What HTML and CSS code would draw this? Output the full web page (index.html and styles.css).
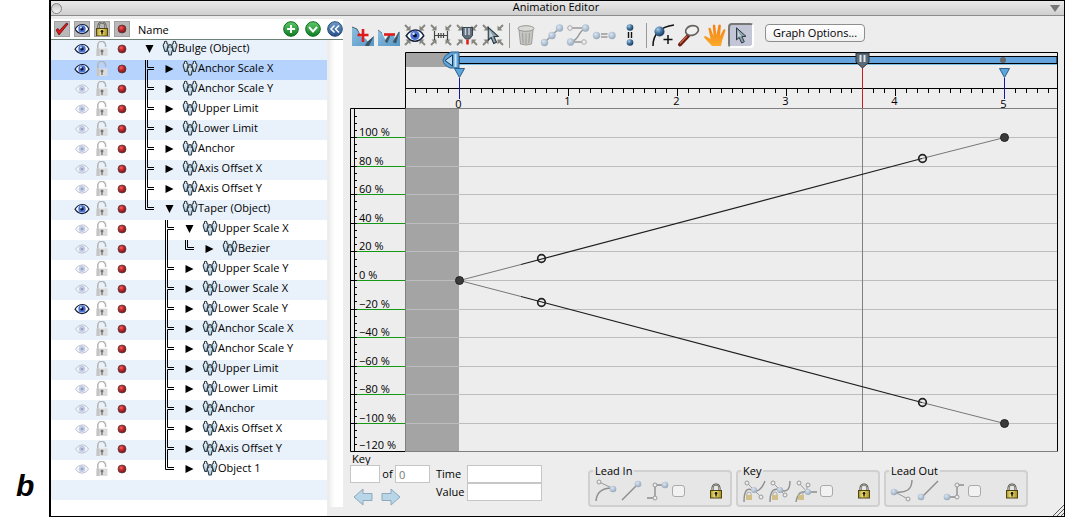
FILE: index.html
```html
<!DOCTYPE html>
<html lang="en">
<head>
<meta charset="utf-8">
<title>Animation Editor</title>
<link rel="stylesheet" href="styles.css">
</head>
<body>
<svg class="defs" aria-hidden="true">
  <defs>
    <radialGradient id="red" cx=".4" cy=".35" r=".6"><stop offset="0" stop-color="#ef6a66"/><stop offset=".5" stop-color="#c2292c"/><stop offset="1" stop-color="#7a1a1e"/></radialGradient>
    <radialGradient id="blue" cx=".35" cy=".3" r=".75"><stop offset="0" stop-color="#a9cdea"/><stop offset=".5" stop-color="#41739f"/><stop offset="1" stop-color="#16324d"/></radialGradient>
    <radialGradient id="pale" cx=".4" cy=".35" r=".7"><stop offset="0" stop-color="#dbe5f0"/><stop offset=".6" stop-color="#aebfd2"/><stop offset="1" stop-color="#92a3b5"/></radialGradient>
    <linearGradient id="green" x2="0" y2="1"><stop offset="0" stop-color="#5fc96a"/><stop offset="1" stop-color="#0c7d22"/></linearGradient>
    <linearGradient id="navy" x2="0" y2="1"><stop offset="0" stop-color="#6f9ccb"/><stop offset="1" stop-color="#244f86"/></linearGradient>
    <linearGradient id="gold"><stop offset="0" stop-color="#a8932c"/><stop offset=".4" stop-color="#f3e37c"/><stop offset="1" stop-color="#a58d1e"/></linearGradient>
    <linearGradient id="sky" x2="1" y2="1"><stop offset="0" stop-color="#8fbfe0"/><stop offset="1" stop-color="#5596c4"/></linearGradient>
    <linearGradient id="orange" x2="0" y2="1"><stop offset="0" stop-color="#f47f10"/><stop offset="1" stop-color="#fbab2c"/></linearGradient>
    <linearGradient id="body" x2="0" y2="1"><stop offset="0" stop-color="#f2f8fc"/><stop offset="1" stop-color="#a9c8de"/></linearGradient>
    <symbol id="eye" viewBox="0 0 16 12"><path d="M1 6.200Q4 1.500 8.400 1.500T15 6.200Q12 10.600 8 10.600T1 6.200Z" fill="#fff" stroke="#17203c" stroke-width="1.200"/><circle cx="8" cy="5.900" r="3.700" fill="#4a72d4"/><circle cx="8" cy="5.900" r="1.600" fill="#081233"/><circle cx="6.900" cy="4.600" r="1" fill="#dfeaff"/></symbol>
    <symbol id="eye-off" viewBox="0 0 16 12"><path d="M1.500 6.200Q4 1.900 8.200 1.900T14.500 6.200Q12 10.200 8 10.200T1.500 6.200Z" fill="#f4f6fb" stroke="#b4bac8" stroke-width=".9"/><circle cx="8" cy="6" r="3.200" fill="#c3cee6"/><circle cx="8" cy="6" r="1.300" fill="#97a3c0"/></symbol>
    <symbol id="unlock" viewBox="0 0 12 16"><path d="M1.800 8V4.500a3.700 3.700 0 0 1 7.800-.5v2" fill="none" stroke="#b4b4b4" stroke-width="1.500"/><rect x=".5" y="7.500" width="11" height="7.500" fill="#dcdcdc"/><path d="M.5 7.500h3v7.500h-3z" fill="#c4c4c4"/><circle cx="6" cy="10" r="1.500" fill="#777"/><path d="M6 10v4" stroke="#777" stroke-width="1.300"/></symbol>
    <symbol id="lock" viewBox="0 0 14 16"><path d="M3.500 8V5a3.500 3.500 0 0 1 7 0v3" fill="none" stroke="#3d3d36" stroke-width="2"/><path d="M3.500 7.500V5a3.500 3.500 0 0 1 7 0v2.500" fill="none" stroke="#c9c9bc" stroke-width=".8"/><rect x="1.500" y="7.500" width="11" height="7.500" fill="url(#gold)" stroke="#4f4512"/><circle cx="7" cy="10.300" r="1.300" fill="#15130a"/><path d="M7 10v3.500" stroke="#15130a" stroke-width="1.300"/></symbol>
    <symbol id="dot" viewBox="0 0 10 10"><circle cx="5" cy="5" r="4" fill="url(#red)" stroke="#5d3a3a" stroke-width=".8"/></symbol>
    <symbol id="check" viewBox="0 0 16 16"><path d="M2 9l3 5L14 3 12.500 2 5.500 9.500 4 7.500z" fill="#e8151b" stroke="#40090b" stroke-width=".7"/></symbol>
    <symbol id="channel" viewBox="0 0 16 16"><g fill="url(#body)" stroke="#2f3c46" stroke-width="1.100" stroke-linejoin="round"><path d="M1.200 5.500Q1.200 3.800 2.600 3.300 2 1.200 3.600 1.200T4.800 3.300Q6.200 3.800 6 5.500L5.300 8.500 4.800 11.500H3L2 8.500z"/><path d="M10 5.500Q10 3.800 11.400 3.300 10.800 1.200 12.400 1.200T13.600 3.300Q15.100 3.800 14.900 5.500L14 8.500 13.300 11.500H11.600L10.800 8.500z"/><path d="M5.300 9.500Q5.300 7.700 6.900 7.200 6.200 4.600 8 4.600T9.100 7.200Q10.800 7.700 10.700 9.500L9.800 12 9.300 15H6.900L6.300 12z"/></g></symbol>
    <symbol id="corners" viewBox="0 0 26 26"><path d="M8.500 3.500v5h-5zM17.500 3.500v5h5zM8.500 22.500v-5h-5zM17.500 22.500v-5h5z" fill="#85857f"/><path d="M3 3l4 4M23 3l-4 4M3 23l4-4M23 23l-4-4" stroke="#85857f" stroke-width="1.800"/></symbol>
    <symbol id="pointer" viewBox="0 0 16 22"><path d="M2.500 1.500v15l3.300-3 3 6.800 3.300-1.600-3-6.200 5-.5z" fill="#8fa3af" stroke="#26333b" stroke-width="1.200"/><path d="M4 5v8l4-1z" fill="#c5d2da"/></symbol>
  </defs>
</svg>

<aside class="figure"><span>b</span></aside>
<main class="window">
  <header class="titlebar">
    <button class="close" aria-label="Close"></button>
    <h1>Animation Editor</h1>
    <button class="collapse" aria-label="Collapse"></button>
  </header>
  <div class="content">
    <section class="tree">
      <div class="tree-head">
        <button class="toggle" aria-label="Enabled"><svg width="16" height="16"><use href="#check"/></svg></button>
        <button class="toggle" aria-label="Visible"><svg width="16" height="12"><use href="#eye"/></svg></button>
        <button class="toggle" aria-label="Locked"><svg width="14" height="16"><use href="#lock"/></svg></button>
        <button class="toggle" aria-label="Record"><svg width="10" height="10"><use href="#dot"/></svg></button>
        <span class="name-label">Name</span>
        <button class="round" aria-label="Add"><svg width="16" height="16" viewBox="0 0 16 16"><circle cx="8" cy="8" r="7.300" fill="url(#green)" stroke="#0b6a1e"/><path d="M8 4v8M4 8h8" stroke="#fff" stroke-width="2"/></svg></button>
        <button class="round" aria-label="Expand all"><svg width="16" height="16" viewBox="0 0 16 16"><circle cx="8" cy="8" r="7.300" fill="url(#green)" stroke="#0b6a1e"/><path d="M4 6l4 4.500L12 6" fill="none" stroke="#fff" stroke-width="2"/></svg></button>
        <button class="round" aria-label="Hide list"><svg width="16" height="16" viewBox="0 0 16 16"><circle cx="8" cy="8" r="7.300" fill="url(#navy)" stroke="#274a77"/><path d="M7.500 4.500L4 8 7.500 11.500M12 4.500L8.500 8l3.500 3.500" fill="none" stroke="#fff" stroke-width="1.500"/></svg></button>
      </div>
      <div class="tree-body">
        <table class="channels">
          <colgroup><col class="c-first"><col class="c-icon"><col class="c-icon"><col class="c-icon"><col></colgroup>
          <tbody id="rows"></tbody>
        </table>
        <div class="track"></div>
      </div>
    </section>

    <section class="editor">
      <div class="toolbar">
        <button class="tool" aria-label="Add key"><svg viewBox="0 0 26 26"><path d="M2 5l5 2 3 7 6 3 2 3 6-6v10H2z" fill="url(#sky)"/><path d="M2 5l5 2 3 6" fill="none" stroke="#47606f"/><path d="M15 24l2-4 7-6-5 10z" fill="#3a5263"/><path d="M13 7v13M7.500 13h11" stroke="#e01a1a" stroke-width="2.600"/></svg></button>
        <button class="tool" aria-label="Remove key"><svg viewBox="0 0 26 26"><path d="M2 8l4 3 4 8 3-6h5l1 5 5-9v15H2z" fill="url(#sky)"/><path d="M2 8l4 3M9 19l4-6 1 1-3 7zM17 20l6-10-3 11z" fill="#3a5263" stroke="#47606f" stroke-width=".8"/><path d="M8 12.500h11" stroke="#e01a1a" stroke-width="2.600"/></svg></button>
        <button class="tool" aria-label="Fit visible"><svg viewBox="0 0 26 26"><use href="#corners" width="26" height="26"/><use href="#eye" x="3" y="6" width="20" height="15"/></svg></button>
        <button class="tool" aria-label="Fit range"><svg viewBox="0 0 26 26"><use href="#corners" width="26" height="26"/><path d="M6.500 9v9M19.500 9v9M7 13.500h12M10.500 11v5M13 11v5M15.500 11v5" stroke="#444" stroke-width="1.200" fill="none"/></svg></button>
        <button class="tool" aria-label="Center playhead"><svg viewBox="0 0 26 26"><use href="#corners" width="26" height="26"/><path d="M8.500 5.500h10v8l-3 3.500h-4l-3-3.500z" fill="#5f6e7a" stroke="#37434c"/><path d="M11.500 6v7M15 6v7" stroke="#c9d4dc" stroke-width="1.500"/><path d="M13.500 17.500v5" stroke="#e01a1a" stroke-width="2.500"/></svg></button>
        <button class="tool" aria-label="Fit selected"><svg viewBox="0 0 26 26"><use href="#corners" width="26" height="26"/><use href="#pointer" x="6" y="4" width="14" height="19"/></svg></button>
        <span class="rule"></span>
        <button class="tool" aria-label="Delete"><svg viewBox="0 0 26 26"><path d="M6 8l1.500 14q5.500 2 11 0L20 8z" fill="#c6c6c4" stroke="#9e9e9b"/><ellipse cx="13" cy="6.500" rx="8" ry="2.800" fill="#dadad8" stroke="#969693"/><path d="M9.500 11l.7 10M13 11.500V22M16.500 11l-.7 10" stroke="#9b9b98"/></svg></button>
        <button class="tool" aria-label="Linear"><svg viewBox="0 0 26 26"><path d="M5 21L21 5.500" stroke="#999" stroke-width="1.500"/><circle cx="5.500" cy="20.500" r="3.700" fill="url(#pale)"/><circle cx="13" cy="13.500" r="3.700" fill="url(#pale)"/><circle cx="20.500" cy="6" r="3.700" fill="url(#pale)"/></svg></button>
        <button class="tool" aria-label="Bezier"><svg viewBox="0 0 26 26"><path d="M7 6h13Q15 10 13.500 13.500T7 20h11" fill="none" stroke="#999" stroke-width="1.400"/><circle cx="5" cy="6" r="2.300" fill="#eee" stroke="#aaa"/><circle cx="20.500" cy="6" r="3.700" fill="url(#pale)"/><circle cx="5.500" cy="20" r="3.700" fill="url(#pale)"/><circle cx="19" cy="20" r="2.300" fill="#eee" stroke="#aaa"/></svg></button>
        <button class="tool" aria-label="Match values"><svg viewBox="0 0 26 26"><circle cx="5.500" cy="13.500" r="3.700" fill="url(#pale)"/><circle cx="21" cy="13.500" r="3.700" fill="url(#pale)"/><path d="M10 12h6.500M10 15h6.500" stroke="#999" stroke-width="1.300"/></svg></button>
        <button class="tool" aria-label="Align keys"><svg viewBox="0 0 26 26"><circle cx="13" cy="5.500" r="3.300" fill="url(#blue)"/><circle cx="13" cy="20.500" r="3.300" fill="url(#blue)"/><path d="M11.500 10v6M14.500 10v6" stroke="#111" stroke-width="1.400"/></svg></button>
        <span class="rule"></span>
        <button class="tool" aria-label="Add point"><svg viewBox="0 0 26 26"><path d="M3 24Q3 6 24 3" fill="none" stroke="#111" stroke-width="1.500"/><circle cx="9.500" cy="9.500" r="5" fill="url(#blue)"/><path d="M18 13v9M13.500 17.500h9" stroke="#111" stroke-width="1.500"/></svg></button>
        <button class="tool" aria-label="Zoom"><svg viewBox="0 0 26 26"><path d="M4 22.500l8-8.500" stroke="#6d1c12" stroke-width="4" stroke-linecap="round"/><path d="M4 21.500l7-7.500" stroke="#c96a4c" stroke-width="1.300"/><ellipse cx="16" cy="8.500" rx="6.500" ry="4.800" fill="#f0f0f0" stroke="#67625e" stroke-width="1.700" transform="rotate(-15 16 8.500)"/></svg></button>
        <button class="tool" aria-label="Pan"><svg viewBox="0 0 26 26"><path d="M10 24L2.500 16q-1-2 1-2l5 3L6.500 7q0-2 2-1l3 8-.7-10.500q1.200-1.800 2.400 0L14.500 13l2-10q1.700-1.300 2.400.5L18 14l3.500-6.500q1.800-1 2 .8L20 19l-1 5z" fill="url(#orange)"/></svg></button>
        <button class="tool selected" aria-label="Select" aria-pressed="true"><svg viewBox="0 0 26 26"><use href="#pointer" x="5" y="2" width="16" height="22"/></svg></button>
        <button class="options">Graph Options...</button>
      </div>

      <svg class="graph" viewBox="0 0 708 402" role="img" aria-label="Animation graph">
        <path d="M55 3h54v14h-54zM55 59h54v342h-54z" fill="#a4a4a4"/>
        <path d="M109 6.500H707V13.500H109z" fill="#64a3db" stroke="#000"/>
        <path d="M109 14.500H707" stroke="#7cc0e8"/>
        <path d="M55.500 58V2.500H707.500V401M55.500 38.500H707" fill="none" stroke="#000"/>
        <g id="time-ticks" stroke="#000"></g>
        <g id="grid"></g>
        <path d="M55.500 59V401M55.500 58.500H707M55 401.500H708" fill="none" stroke="#808080"/>
        <path d="M55.500 58.500H.5V401.500H55M4.500 58.500V401" fill="none" stroke="#000"/>
        <g id="value-ticks" stroke="#000"></g>
        <g id="graph-labels"></g>
        <path d="M109.500 28V49M654.500 28V49" stroke="#1618a0"/>
        <path d="M104.500 18.500h10l-5 9zM649.500 18.500h10l-5 9z" fill="#5aa6dd" stroke="#2b5f87"/>
        <path d="M109 2h-8q-7 3-8 8 0 5 7 8h9z" fill="#60a3d8" stroke="#2d638f"/>
        <path d="M102.500 5v11L95 10.500z" fill="#b9dcf3" stroke="#163b5c"/><path d="M105.500 4v13" stroke="#cbe6f8" stroke-width="2"/>
        <circle cx="653" cy="10" r="3" fill="#666"/>
        <path d="M512.500 16V58" stroke="#c81e1e"/><path d="M512.500 59V401" stroke="#808080"/>
        <path d="M506 3h13v9l-6.500 6-6.500-6z" fill="#5c6a76" stroke="#28333c"/><path d="M510.500 5v7M514.500 5v7" stroke="#dfe8ee" stroke-width="2"/>
        <path d="M109.500 230.500L171 214.500M109.500 230.500L171 246.500M572 108.500L654.500 87.500M572 352.500L654.500 373.500" stroke="#777" fill="none"/>
        <path d="M171 214.500L572 108.500M171 246.500L572 352.500" stroke="#1e1e1e" stroke-width="1.200" fill="none"/>
        <g fill="none" stroke="#222" stroke-width="1.700"><circle cx="191.500" cy="208.500" r="3.800"/><circle cx="191.500" cy="252.500" r="3.800"/><circle cx="572.500" cy="108.500" r="3.800"/><circle cx="572.500" cy="352.500" r="3.800"/></g>
        <g fill="#3a3a3a" stroke="#222"><circle cx="109.500" cy="230.500" r="4"/><circle cx="654.500" cy="87.500" r="4"/><circle cx="654.500" cy="373.500" r="4"/></g>
      </svg>

      <div class="bottom">
        <div class="key-nav">
          <label for="key-no">Key</label>
          <div class="key-line"><input id="key-no" class="field short"><label for="key-count">of</label><input id="key-count" class="field count" value="0"></div>
          <div class="arrows">
            <button class="arrow" aria-label="Previous key"><svg width="24" height="20" viewBox="0 0 24 20"><path d="M2 10l9-8v4.500h9v7h-9V18z" fill="#b9d6e8" stroke="#8fa9bd"/></svg></button>
            <button class="arrow" aria-label="Next key"><svg width="24" height="20" viewBox="0 0 24 20"><path d="M22 10l-9-8v4.500H4v7h9V18z" fill="#b9d6e8" stroke="#8fa9bd"/></svg></button>
          </div>
        </div>
        <div class="values">
          <label for="time">Time</label><input id="time" class="field">
          <label for="value">Value</label><input id="value" class="field">
        </div>
        <div class="groups">
          <fieldset><legend>Lead In</legend>
            <button class="mini" aria-label="Lead in curve"><svg viewBox="0 0 24 24"><path d="M2 22Q3 9 18 9" fill="none" stroke="#8d8d8d" stroke-width="1.400"/><path d="M5 3l13 6" stroke="#999"/><circle cx="5" cy="3" r="2" fill="#eee" stroke="#999"/><circle cx="19" cy="10" r="3.300" fill="url(#pale)"/></svg></button>
            <button class="mini" aria-label="Lead in linear"><svg viewBox="0 0 24 24"><path d="M2 21L18 5" stroke="#8d8d8d" stroke-width="1.400"/><circle cx="18" cy="5" r="3.300" fill="url(#pale)"/></svg></button>
            <button class="mini" aria-label="Lead in step"><svg viewBox="0 0 24 24"><path d="M1 19h8V6h9" fill="none" stroke="#8d8d8d" stroke-width="1.400"/><circle cx="9" cy="6" r="2" fill="#eee" stroke="#999"/><circle cx="9" cy="19" r="2" fill="#eee" stroke="#999"/><circle cx="19" cy="6" r="3.300" fill="url(#pale)"/></svg></button>
            <input type="checkbox" aria-label="Lead in option"><button class="lock" aria-label="Lock lead in"><svg width="14" height="16"><use href="#lock"/></svg></button>
          </fieldset>
          <fieldset><legend>Key</legend>
            <button class="mini" aria-label="Smooth key"><svg viewBox="0 0 24 24"><path d="M2 23Q2 7 10 11t13-9" fill="none" stroke="#8d8d8d" stroke-width="1.400"/><path d="M5 4l14 14" stroke="#999"/><circle cx="5" cy="4" r="2" fill="#eee" stroke="#999"/><circle cx="19" cy="18" r="2" fill="#eee" stroke="#999"/><circle cx="12" cy="11" r="3" fill="url(#pale)"/><path d="M5 17v-2a2 2 0 0 1 4 0v2" fill="none" stroke="#aaa"/><path d="M4 16h6v5H4z" fill="#d2be87"/></svg></button>
            <button class="mini" aria-label="Broken key"><svg viewBox="0 0 24 24"><path d="M2 23Q2 7 12 11t10-9" fill="none" stroke="#8d8d8d" stroke-width="1.400"/><path d="M5 4l7 7 5 5" stroke="#999"/><circle cx="5" cy="4" r="2" fill="#eee" stroke="#999"/><circle cx="17" cy="16" r="2" fill="#eee" stroke="#999"/><circle cx="12" cy="11" r="3" fill="url(#pale)"/><path d="M5 17v-2a2 2 0 0 1 4 0v2" fill="none" stroke="#aaa"/><path d="M4 16h6v5H4z" fill="#d2be87"/></svg></button>
            <button class="mini" aria-label="Free key"><svg viewBox="0 0 24 24"><path d="M2 23Q4 11 13 13h10" fill="none" stroke="#8d8d8d" stroke-width="1.400"/><path d="M5 4l8 9V6" fill="none" stroke="#999"/><circle cx="5" cy="4" r="2" fill="#eee" stroke="#999"/><circle cx="14" cy="6" r="2" fill="#eee" stroke="#999"/><circle cx="14" cy="13" r="3" fill="url(#pale)"/><path d="M5 17v-2a2 2 0 0 1 4 0v2" fill="none" stroke="#aaa"/><path d="M4 16h6v5H4z" fill="#d2be87"/></svg></button>
            <input type="checkbox" aria-label="Key option"><button class="lock" aria-label="Lock key"><svg width="14" height="16"><use href="#lock"/></svg></button>
          </fieldset>
          <fieldset><legend>Lead Out</legend>
            <button class="mini" aria-label="Lead out curve"><svg viewBox="0 0 24 24"><path d="M5 13Q22 15 22 1" fill="none" stroke="#8d8d8d" stroke-width="1.400"/><path d="M5 13l13 7" stroke="#999"/><circle cx="18" cy="20" r="2" fill="#eee" stroke="#999"/><circle cx="4" cy="13" r="3.300" fill="url(#pale)"/></svg></button>
            <button class="mini" aria-label="Lead out linear"><svg viewBox="0 0 24 24"><path d="M6 18L22 2" stroke="#8d8d8d" stroke-width="1.400"/><circle cx="5" cy="18" r="3.300" fill="url(#pale)"/></svg></button>
            <button class="mini" aria-label="Lead out step"><svg viewBox="0 0 24 24"><path d="M4 18h11V6h7" fill="none" stroke="#8d8d8d" stroke-width="1.400"/><circle cx="15" cy="6" r="2" fill="#eee" stroke="#999"/><circle cx="15" cy="18" r="2" fill="#eee" stroke="#999"/><circle cx="5" cy="18" r="3.300" fill="url(#pale)"/></svg></button>
            <input type="checkbox" aria-label="Lead out option"><button class="lock" aria-label="Lock lead out"><svg width="14" height="16"><use href="#lock"/></svg></button>
          </fieldset>
        </div>
      </div>
      <svg class="grip" width="12" height="12" viewBox="0 0 12 12"><path d="M1 12L12 1M5 12l7-7M9 12l3-3" stroke="#555"/></svg>
    </section>
  </div>
</main>
<script src="script.js"></script>
</body>
</html>
```
FILE: styles.css
```css
* { box-sizing: border-box; }
body {
  margin: 0;
  display: flex;
  min-height: 100vh;
  background: #fff;
  color: #000;
  font: 11px/14px "Open Sans", "Noto Sans", sans-serif;
}
.defs { position: absolute; width: 0; height: 0; }
button { margin: 0; padding: 0; border: 0; background: none; font: inherit; color: inherit; }
button svg { display: block; }
input { font: inherit; margin: 0; }

.figure {
  width: 49px;
  display: flex;
  align-items: flex-end;
  padding: 0 0 16px 16px;
  font: italic bold 30px/30px "Liberation Sans", Arial, sans-serif;
}
.window {
  flex: 1;
  min-width: 0;
  display: flex;
  flex-direction: column;
  border: 1px solid #000;
  border-left-width: 2px;
  background: #ededed;
}
.titlebar {
  height: 15px;
  display: flex;
  align-items: center;
  justify-content: space-between;
  padding: 0 4px 0 0;
  background: linear-gradient(#e9e9e9, #cfcfcf);
  border-bottom: 1px solid #8c8c8c;
}
.titlebar h1 { margin: 0; padding-bottom: 2px; font: inherit; line-height: 12px; }
.close {
  width: 11px;
  height: 11px;
  border: 1px solid #858585;
  border-radius: 50%;
  background: linear-gradient(#c4c4c4, #f4f4f4);
}
.collapse {
  border: 5px solid transparent;
  border-top: 7px solid #777;
  border-bottom: 0;
}
.content { flex: 1; display: flex; }

.tree { width: 292px; display: flex; flex-direction: column; }
.tree-head {
  height: 24px;
  display: flex;
  align-items: center;
  gap: 4px;
  padding: 0 0 1px 3px;
  background: #fff;
  border-top: 3px solid #ededed;
  border-bottom: 1px solid #6c8176;
}
.toggle {
  width: 16px;
  height: 16px;
  display: grid;
  place-items: center;
  background: #b9b9b9;
  outline: 1px solid #a0a0a0;
  outline-offset: -1px;
}
.name-label { flex: 1; padding: 2px 0 0 4px; }
.round { margin-left: 2px; }
.tree-body { flex: 1; display: flex; background: #ededed; }
.channels {
  width: 276px;
  border-collapse: collapse;
  table-layout: fixed;
  background: #fff;
}
.c-first { width: 21px; }
.c-icon { width: 20px; }
.channels tr { height: 20px; }
.channels tr:nth-child(odd) { background: #e9f1fb; }
.channels tr.current { background: #b5d3fd; }
.channels tr.rest { height: auto; background: #fff; }
.channels td { padding: 0; vertical-align: top; }
.channels td > button { display: grid; place-items: center; width: 20px; height: 18px; }
.name { display: flex; align-items: center; height: 20px; padding-left: 8px; }
.name svg { flex: none; }
.name .text { padding: 0 0 4px 0; white-space: nowrap; }
.name .icon { margin: 0 0 4px 2px; }
.twist { width: 20px; height: 20px; }
.track { width: 13px; margin: 0 0 9px 3px; background: linear-gradient(90deg, #f3f3f3, #fff 40%); }

.editor { flex: 1; min-width: 0; padding: 0 6px 0 7px; position: relative; }
.toolbar { height: 34px; display: flex; align-items: center; }
.tool { width: 26px; height: 26px; margin-top: 4px; }
.tool svg { width: 26px; height: 26px; }
.tool.selected {
  height: 25px;
  background: #c3c6d6;
  border: 2px solid #777;
  border-right-color: #fff;
  border-bottom-color: #fff;
  border-radius: 4px;
}
.tool.selected svg { width: 22px; height: 21px; }
.rule { width: 1px; height: 25px; margin: 4px 3px 0; background: #999; }
.options {
  height: 18px;
  margin-left: 11px;
  width: 100px;
  border: 1px solid #8e8e8e;
  border-radius: 4px;
  background: linear-gradient(#fff, #f1f1f1);
  line-height: 14px;
}
.graph { display: block; width: 100%; height: auto; overflow: visible; font: 11px "Open Sans", "Noto Sans", sans-serif; }

.bottom { display: flex; align-items: flex-start; }
.key-nav { width: 80px; }
.key-nav > label { display: block; height: 13px; line-height: 13px; padding-left: 2px; }
.key-line { display: flex; justify-content: space-between; align-items: center; }
.field { width: 75px; height: 18px; padding: 0 3px; border: 1px solid #c6c6c6; background: #fff; outline: 0; }
.field.short { width: 30px; }
.field.count { width: 35px; color: #777; }
.arrows { display: flex; gap: 2px; padding: 4px 0 0 2px; }
.values {
  display: grid;
  grid-template-columns: 31px 75px;
  align-items: center;
  margin: 13px 0 0 6px;
}
.groups { display: flex; gap: 4px; margin-left: 46px; padding-top: 12px; }
fieldset {
  width: 144px;
  height: 43px;
  margin: 0;
  min-width: 0;
  padding: 0 7px 0 4px;
  display: flex;
  align-items: center;
  border: 2px solid #d0d0d0;
  border-radius: 4px;
  background: #e6e6e6;
}
legend { padding: 0 2px; margin-left: -1px; line-height: 13px; }
.mini svg { width: 24px; height: 24px; }
.mini { margin-right: 2px; }
fieldset input {
  appearance: none;
  width: 13px;
  height: 12px;
  border: 1px solid #aaa;
  border-radius: 3px;
  background: #f2f2f2;
}
.lock { margin-left: auto; }
.grip { position: absolute; right: 0; bottom: 0; }
```
FILE: script.js
```js
// [name, depth, visible, open, is last child]
const channels = [
  ["Bulge (Object)", 0, 1, 1, 0], ["Anchor Scale X", 1, 1, 0, 0], ["Anchor Scale Y", 1, 0, 0, 0],
  ["Upper Limit", 1, 0, 0, 0], ["Lower Limit", 1, 0, 0, 0], ["Anchor", 1, 0, 0, 0],
  ["Axis Offset X", 1, 0, 0, 0], ["Axis Offset Y", 1, 0, 0, 0], ["Taper (Object)", 1, 1, 1, 1],
  ["Upper Scale X", 2, 0, 1, 0], ["Bezier", 3, 0, 0, 1], ["Upper Scale Y", 2, 0, 0, 0],
  ["Lower Scale X", 2, 0, 0, 0], ["Lower Scale Y", 2, 1, 0, 0], ["Anchor Scale X", 2, 0, 0, 0],
  ["Anchor Scale Y", 2, 0, 0, 0], ["Upper Limit", 2, 0, 0, 0], ["Lower Limit", 2, 0, 0, 0],
  ["Anchor", 2, 0, 0, 0], ["Axis Offset X", 2, 0, 0, 0], ["Axis Offset Y", 2, 0, 0, 0],
  ["Object 1", 2, 0, 0, 1]
];

const cell = d => `<svg width="20" height="20" fill="none" stroke="#000">${d ? `<path d="${d}"/>` : ""}</svg>`;
const pass = "M5.5 0V20M7.5 0V20";
const branch = "M5.5 0V20M7.5 0V7.5H14M14 9.5H7.5V20";
const end = "M5.5 0V9.5H14M7.5 0V7.5H14";

function indent(depth, last) {
  let out = "";
  for (let i = 1; i < depth; i++) out += cell(depth === 3 && i === 2 ? pass : "");
  return depth ? out + cell(last ? end : branch) : out;
}

document.getElementById("rows").innerHTML = channels.map(([name, depth, visible, open, last], i) => `
<tr${i === 1 ? ' class="current"' : ""}>
<td></td>
<td><button aria-label="Visible"><svg width="16" height="12"><use href="#${visible ? "eye" : "eye-off"}"/></svg></button></td>
<td><button aria-label="Lock"><svg width="12" height="16"><use href="#unlock"/></svg></button></td>
<td><button aria-label="Record"><svg width="10" height="10"><use href="#dot"/></svg></button></td>
<td><div class="name">${indent(depth, last)}<button class="twist" aria-label="${open ? "Collapse" : "Expand"}"><svg width="20" height="20"><path d="${open ? "M5.5 5h8l-4 8z" : "M5.5 5v8l8-4z"}"/></svg></button><svg class="icon" width="16" height="16"><use href="#channel"/></svg><span class="text">${name}</span></div></td>
</tr>`).join("") + '<tr><td colspan="5"></td></tr><tr class="rest"><td colspan="5"></td></tr>';

const X0 = 109.5, UNIT = 109, Y0 = 230.5, STEP = 28.6;

let ticks = "", labels = "";
for (let i = -4; i <= 54; i++) {
  const x = Math.round(X0 + i * UNIT / 10 - 0.5) + 0.5;
  ticks += `M${x} 39v${i % 10 ? 4 : 7}`;
  if (i >= 0 && i % 10 === 0) labels += `<text x="${x - 1}" y="${i % 50 ? 55 : 58}" text-anchor="middle">${i / 10}</text>`;
}
document.getElementById("time-ticks").innerHTML = `<path d="${ticks}"/>`;

let grid = "", green = "", side = "";
for (let v = -120; v <= 100; v += 20) {
  const y = Math.round(Y0 - v / 20 * STEP - 0.5) + 0.5;
  if (v > -120) {
    grid += `M56 ${y}H707`;
    green += `M5 ${y}H55`;
    side += `M0 ${y}H7`;
  }
  labels += `<text x="9" y="${Math.min(y - 1.5, 399)}">${v < 0 ? "\u2212" + -v : v} %</text>`;
}
for (let v = -115; v < 120; v += 5) side += `M5 ${Math.round(Y0 - v / 20 * STEP - 0.5) + 0.5}h2`;
document.getElementById("grid").innerHTML = `<path d="${grid}" stroke="#bdbdbd"/><path d="${green}" stroke="#149a14"/>`;
document.getElementById("value-ticks").innerHTML = `<path d="${side}"/>`;
document.getElementById("graph-labels").innerHTML = labels;
```
